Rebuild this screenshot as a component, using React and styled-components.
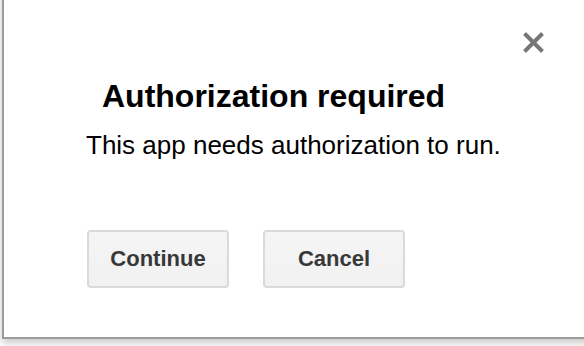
import React from 'react';
import styled, { createGlobalStyle } from 'styled-components';

const GlobalStyle = createGlobalStyle`
  html, body {
    margin: 0;
    padding: 0;
    background: #ffffff;
    overflow: hidden;
  }
  body {
    font-family: "Liberation Sans", Arial, sans-serif;
  }
`;

const Page = styled.div`
  width: 584px;
  height: 346px;
  padding-left: 2px;
  box-sizing: border-box;
  overflow: hidden;
`;

const Dialog = styled.div`
  box-sizing: border-box;
  width: 620px;
  height: 349px;
  margin-top: -10px;
  background: #fff;
  border: 2px solid #9c9c9c;
  box-shadow: 0 4px 8px rgba(0, 0, 0, 0.22);
  padding: 39px 75px 0 0;
  display: flex;
  flex-direction: column;
`;

const Header = styled.div`
  display: flex;
  justify-content: flex-end;
`;

const CloseButton = styled.button`
  width: 23px;
  height: 23px;
  padding: 0;
  border: none;
  background: transparent;
  cursor: pointer;
  display: flex;
  svg {
    display: block;
  }
`;

const Title = styled.h1`
  margin: 24px 0 0 98px;
  font-size: 32px;
  line-height: 36px;
  font-weight: bold;
  color: #000;
`;

const Message = styled.p`
  margin: 16px 0 0 82px;
  font-size: 26px;
  line-height: 30px;
  color: #000;
`;

const Actions = styled.div`
  display: flex;
  gap: 34px;
  margin: 70px 0 0 83px;
`;

const Button = styled.button`
  box-sizing: border-box;
  width: 142px;
  height: 58px;
  border: 2px solid #dadada;
  border-radius: 4px;
  background: linear-gradient(#f5f5f5, #f1f1f1);
  color: #383838;
  font-family: "Liberation Sans", Arial, sans-serif;
  font-weight: bold;
  font-size: 22px;
  cursor: pointer;
`;

const CloseIcon = () => (
  <svg width="23" height="23" viewBox="0 0 23 23">
    <path
      d="M2.5 2.5 L20.5 20.5 M20.5 2.5 L2.5 20.5"
      stroke="#777"
      strokeWidth="4"
      strokeLinecap="butt"
      fill="none"
    />
  </svg>
);

export default function App() {
  return (
    <>
      <GlobalStyle />
      <Page>
        <Dialog>
          <Header>
            <CloseButton aria-label="Close">
              <CloseIcon />
            </CloseButton>
          </Header>
          <Title>Authorization required</Title>
          <Message>This app needs authorization to run.</Message>
          <Actions>
            <Button>Continue</Button>
            <Button>Cancel</Button>
          </Actions>
        </Dialog>
      </Page>
    </>
  );
}
